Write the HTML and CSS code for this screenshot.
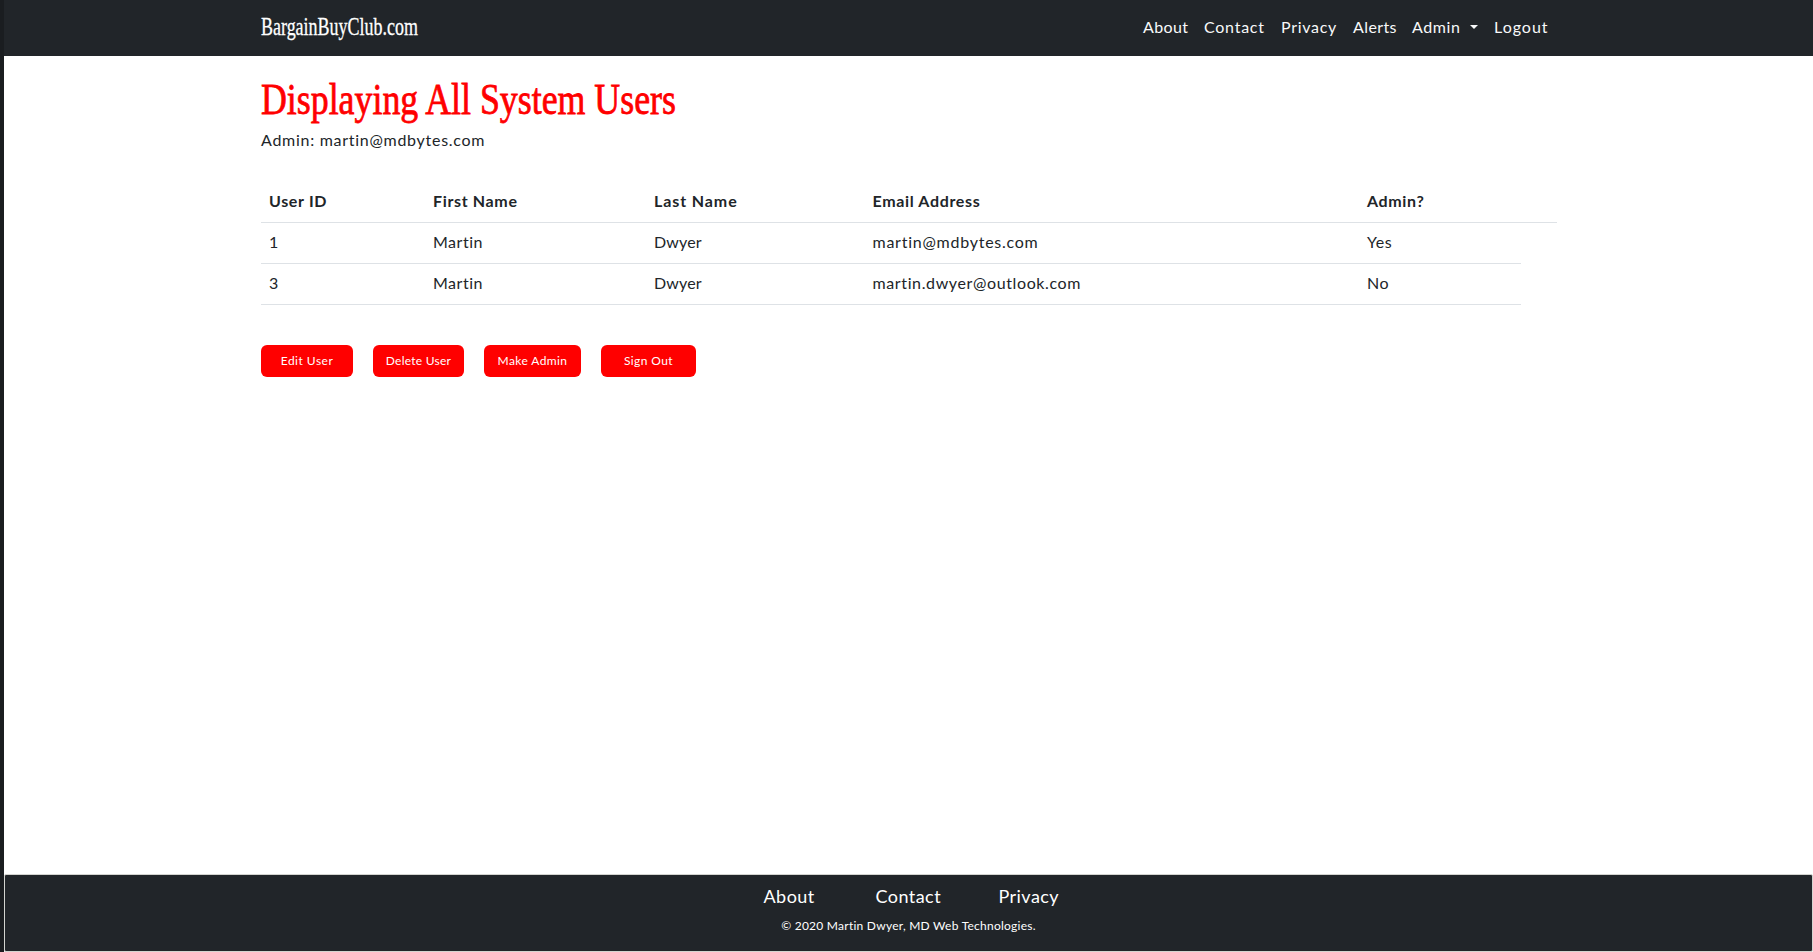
FILE: index.html
```html
<!DOCTYPE html>
<html lang="en">
<head>
<meta charset="utf-8">
<title>BargainBuyClub.com</title>
<link rel="stylesheet" href="styles.css">
</head>
<body>
<div class="page">
  <header class="navbar">
    <div class="container navbar-inner">
      <a class="brand">BargainBuyClub.com</a>
      <nav class="nav">
        <a class="nav-about">About</a>
        <a class="nav-contact">Contact</a>
        <a class="nav-privacy">Privacy</a>
        <a class="nav-alerts">Alerts</a>
        <a class="nav-admin">Admin<span class="caret"></span></a>
        <a class="nav-logout">Logout</a>
      </nav>
    </div>
  </header>
  <main class="container main">
    <h1 class="title"><span class="title-text">Displaying All System Users</span></h1>
    <p class="current">Admin: martin@mdbytes.com</p>
    <div class="users">
      <div class="row head"><span>User ID</span><span>First Name</span><span class="last">Last Name</span><span>Email Address</span><span>Admin?</span></div>
      <div class="row"><span>1</span><span>Martin</span><span class="dwyer">Dwyer</span><span class="email">martin@mdbytes.com</span><span>Yes</span></div>
      <div class="row"><span>3</span><span>Martin</span><span class="dwyer">Dwyer</span><span class="email email-long">martin.dwyer@outlook.com</span><span>No</span></div>
    </div>
    <div class="actions">
      <button class="btn btn-edit">Edit User</button>
      <button class="btn btn-delete">Delete User</button>
      <button class="btn btn-make">Make Admin</button>
      <button class="btn btn-out">Sign Out</button>
    </div>
  </main>
  <footer class="footer">
    <div class="footer-links"><a>About</a><a>Contact</a><a>Privacy</a></div>
    <p class="copyright">© 2020 Martin Dwyer, MD Web Technologies.</p>
  </footer>
</div>
</body>
</html>
```
FILE: styles.css
```css
* { box-sizing: border-box; }
body {
  margin: 0;
  background: #fff;
  color: #212529;
  font: 16px/24px Lato, "Open Sans", sans-serif;
  letter-spacing: 0.5px;
}
.page {
  height: 952px;
  border-left: 4px solid #1a1d20;
  display: flex;
  flex-direction: column;
}
.container { width: 1296px; margin-left: 257px; }
.navbar { height: 56px; background: #212529; }
.navbar-inner { height: 54px; display: flex; align-items: center; justify-content: space-between; }
.brand {
  color: #fff;
  font: 25px/30px "Liberation Serif", serif;
  letter-spacing: 0;
  white-space: nowrap;
  -webkit-text-stroke: 0.3px #fff;
  transform: scaleX(0.719);
  transform-origin: left;
}
.nav { display: flex; color: #f8f9fa; letter-spacing: 0.6px; }
.nav a { padding-left: 8px; white-space: nowrap; }
.nav-about { width: 61px; letter-spacing: 0.4px; }
.nav-contact { width: 77px; letter-spacing: 0.75px; }
.nav-privacy { width: 72px; letter-spacing: 0.7px; }
.nav-alerts { width: 59px; letter-spacing: 0.4px; }
.nav-admin { width: 82px; display: flex; align-items: center; justify-content: space-between; padding-right: 8px; }
.nav-logout { width: 71px; letter-spacing: 1px; }
.caret { border: 4px solid transparent; border-top-color: #f8f9fa; border-bottom: 0; }
.main { flex: 1; padding-top: 22px; }
.title { margin: 0; height: 50px; color: #f00; font: 45px/42px "Liberation Serif", serif; letter-spacing: 0; white-space: nowrap; }
.title-text { display: inline-block; -webkit-text-stroke: 0.8px #f00; transform: scaleX(0.796); transform-origin: left; }
.current { margin: 0 0 28px; letter-spacing: 0.72px; }
.row {
  width: 1260px;
  height: 41px;
  padding: 8px 0;
  display: grid;
  grid-template-columns: 164px 221px 218.5px 494.5px 1fr;
  border-bottom: 1px solid #dee2e6;
}
.row span { padding-left: 8px; }
.row .email { letter-spacing: 0.75px; }
.row .email-long { letter-spacing: 0.62px; }
.row .dwyer { letter-spacing: 0.15px; }
.row .last { letter-spacing: 0.9px; }
.row:not(.head) { padding-top: 7px; }
.head { width: 1296px; height: 43px; padding-top: 9px; font-weight: 700; letter-spacing: 0.65px; }
.actions { margin-top: 40px; display: flex; gap: 20px; }
.btn {
  height: 32px;
  padding: 0;
  border: 0;
  border-radius: 6px;
  background: #f00;
  color: #fff;
  font: 12px/18px Lato, sans-serif;
  letter-spacing: 0.4px;
}
.btn-edit { width: 92px; letter-spacing: 0.5px; }
.btn-delete { width: 91px; letter-spacing: 0.25px; }
.btn-make { width: 97px; }
.btn-out { width: 95px; }
.footer {
  height: 78px;
  border: 1px solid #d3d4d0;
  border-radius: 2px;
  background: #212529;
  color: #fff;
  display: flex;
  flex-direction: column;
  align-items: center;
  padding-top: 8px;
}
.footer-links { display: grid; grid-template-columns: 112px 123px 57px; padding-left: 2px; font-size: 18px; line-height: 27px; letter-spacing: 0.45px; }
.copyright { margin: 7px 0 0; font-size: 12px; line-height: 18px; letter-spacing: 0.25px; }
```
